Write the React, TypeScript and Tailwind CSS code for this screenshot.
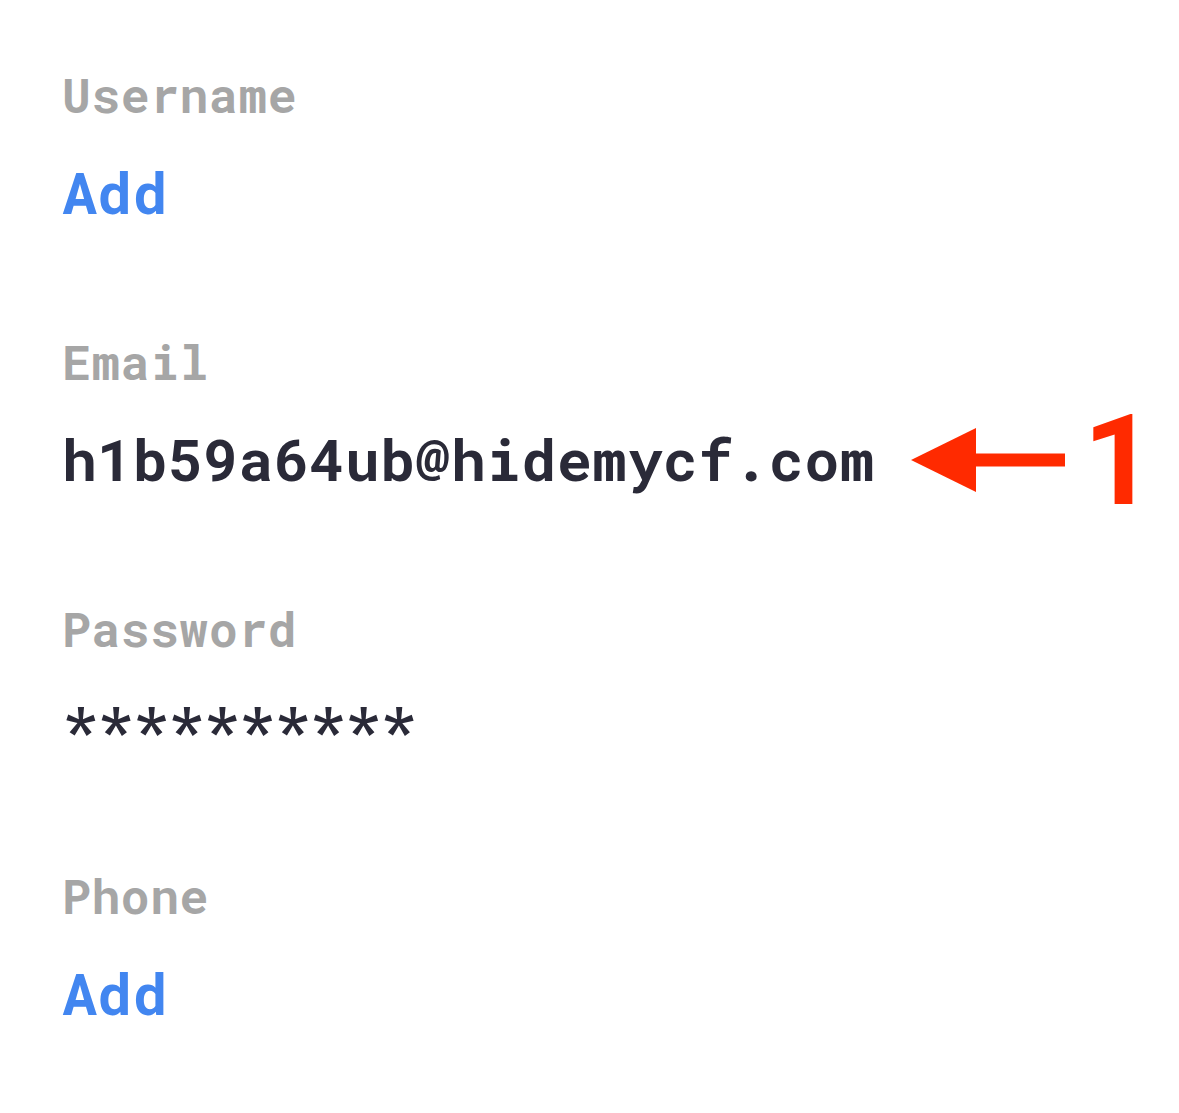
const mono = "font-['Roboto_Mono','DejaVu_Sans_Mono','Liberation_Mono',monospace] font-bold";

const Field = ({ label, children }: { label: string; children: React.ReactNode }) => (
  <div className="flex flex-col h-[267px]">
    <div className={`${mono} text-[48px] tracking-[0.6px] leading-[56px] text-[#a6a6a6]`}>{label}</div>
    <div className="mt-[35px] relative">{children}</div>
  </div>
);

const Value = ({ text, blue }: { text: string; blue?: boolean }) => (
  <div
    className={`${mono} text-[58px] tracking-[0.55px] leading-[68px] ${blue ? "text-[#4286f0]" : "text-[#2a2a38]"}`}
  >
    {text}
  </div>
);

export default function App() {
  return (
    <div className="w-[1179px] h-[1113px] bg-white pt-[67px] pl-[62px] overflow-hidden">
      <Field label="Username">
        <Value text="Add" blue />
      </Field>
      <Field label="Email">
        <Value text="h1b59a64ub@hidemycf.com" />
        {/* annotation */}
        <div className="absolute left-[849px] top-[-19px] flex items-center">
          <svg width="154" height="64" viewBox="0 0 154 64" className="mb-[2px]">
            <polygon points="0,32 65,0 65,64" fill="#ff2a00" />
            <rect x="64" y="25.5" width="90" height="13" fill="#ff2a00" />
          </svg>
          <span className="ml-[18px] font-['Roboto','Liberation_Sans',sans-serif] font-bold text-[126px] leading-[110px] text-[#ff2a00]">
            1
          </span>
        </div>
      </Field>
      <Field label="Password">
        <Value text="**********" />
      </Field>
      <Field label="Phone">
        <Value text="Add" blue />
      </Field>
    </div>
  );
}
